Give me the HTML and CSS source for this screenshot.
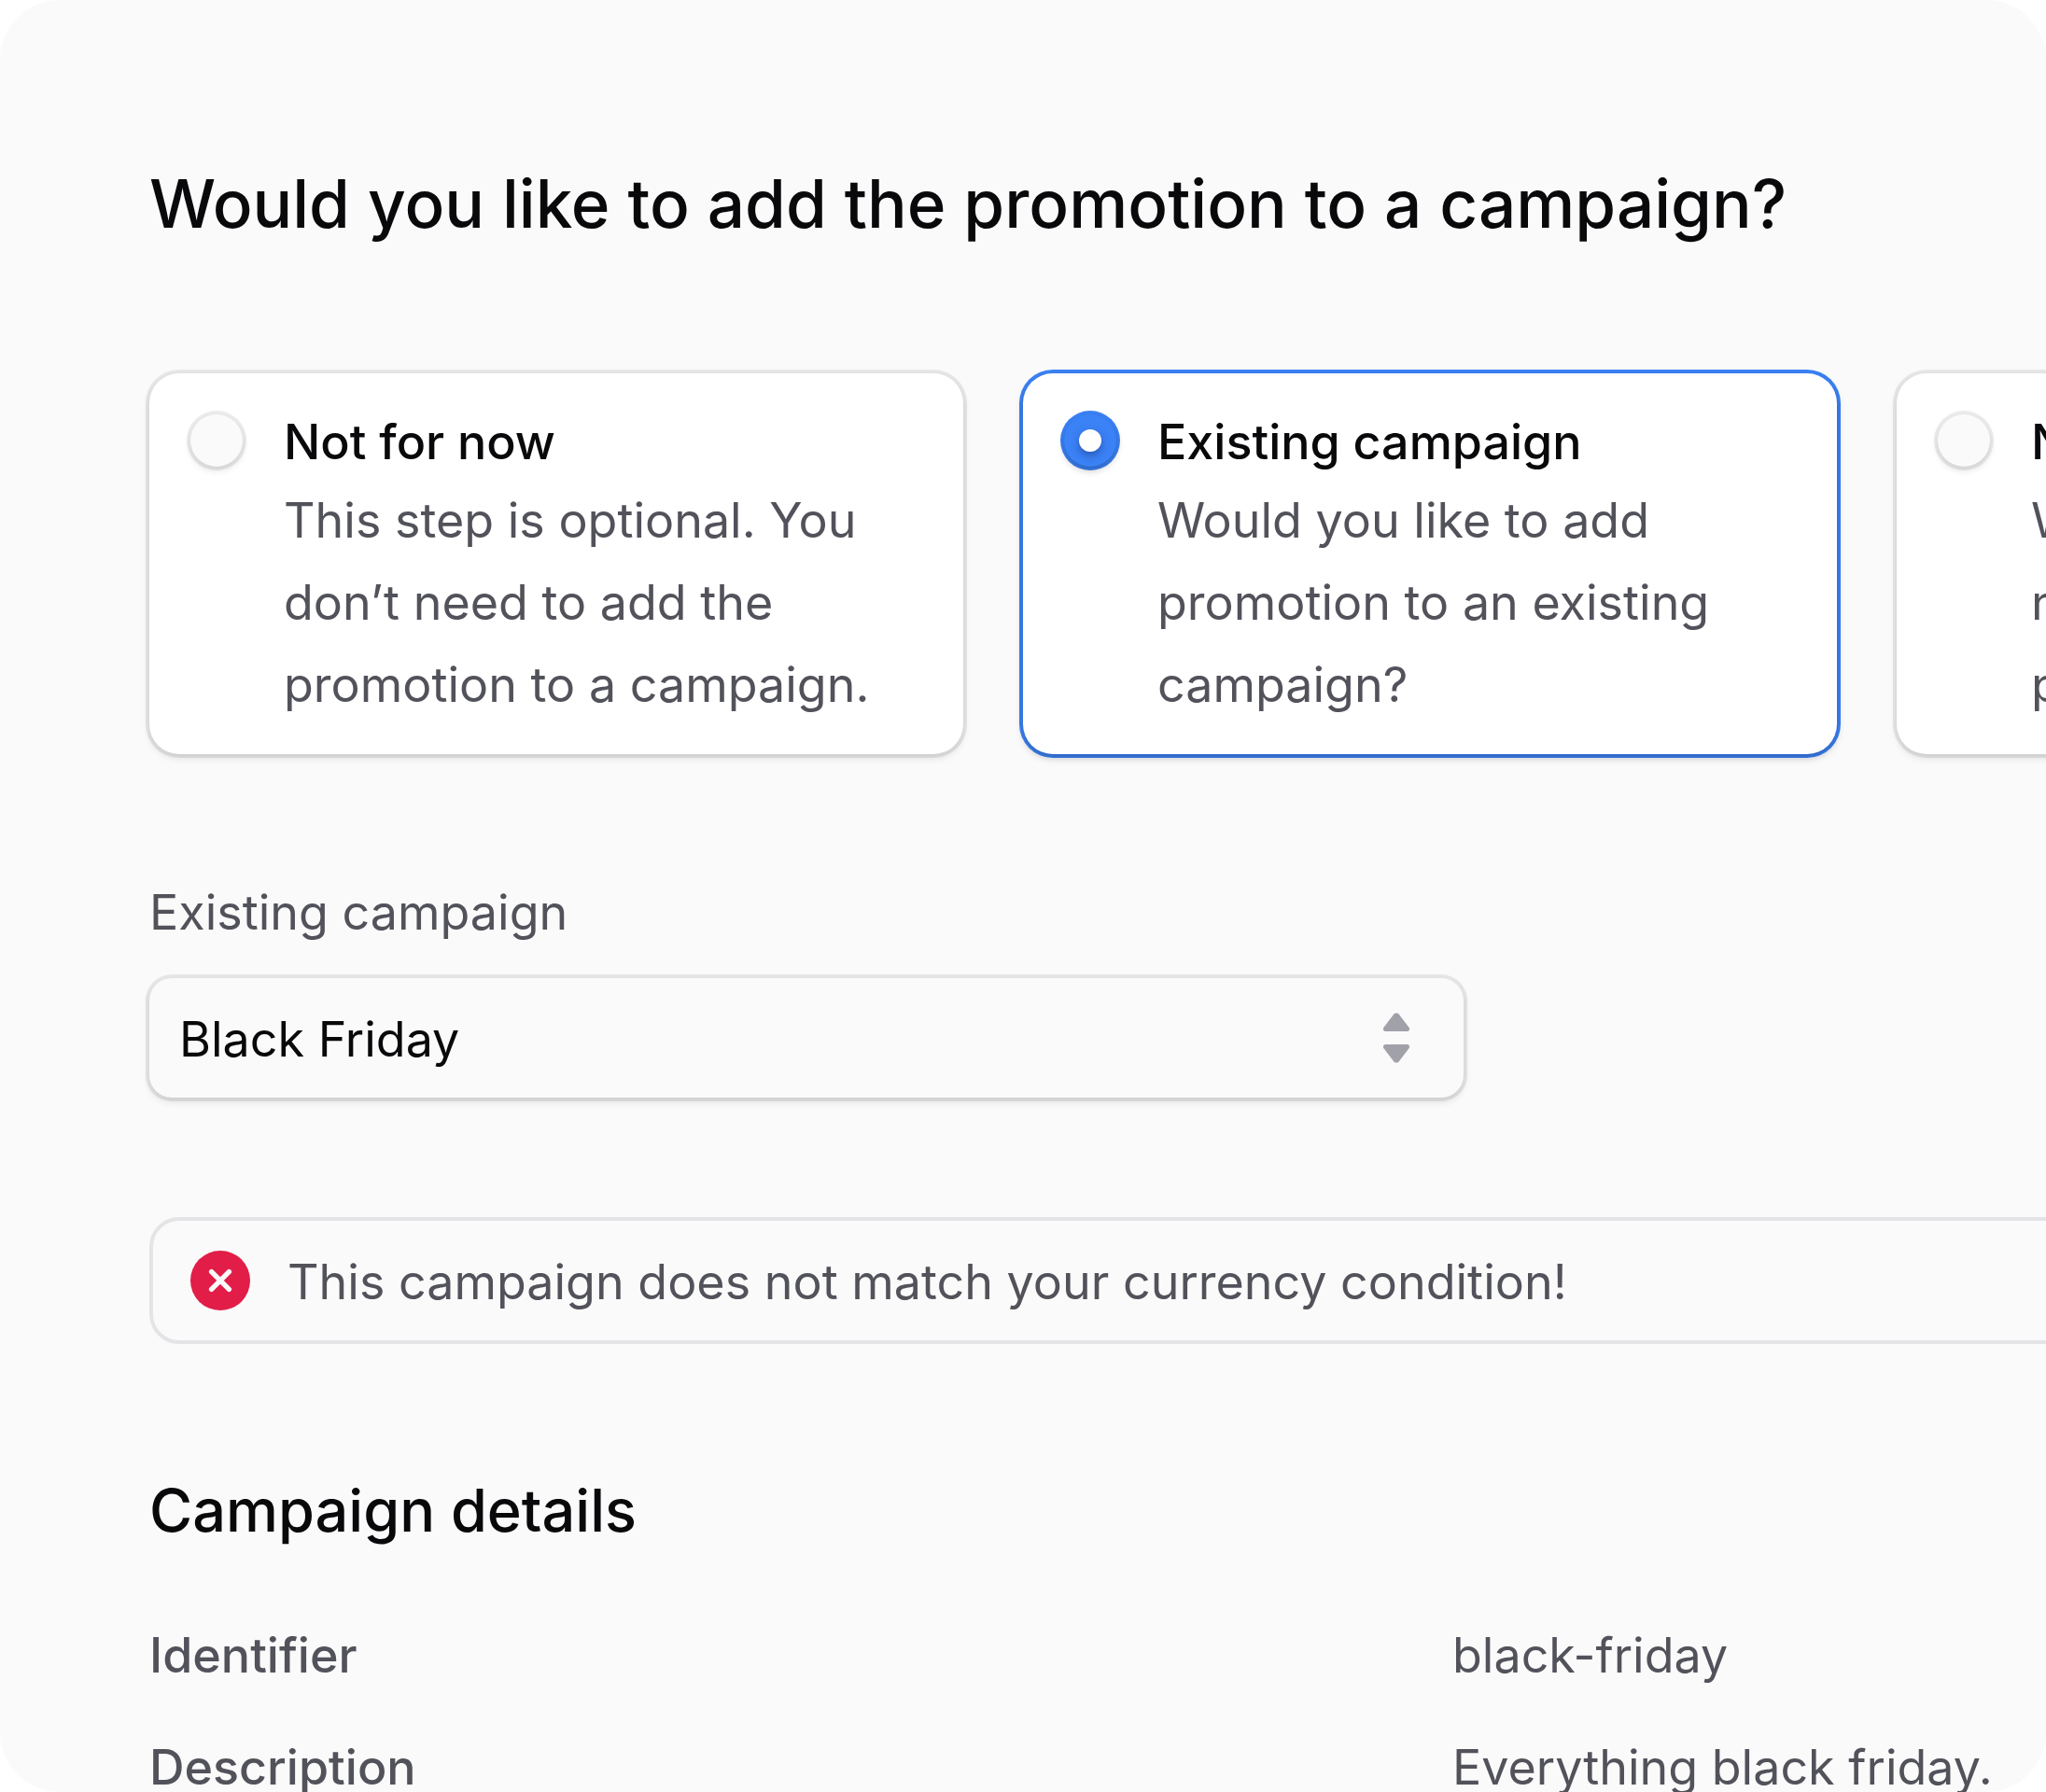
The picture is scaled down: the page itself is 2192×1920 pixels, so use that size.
FILE: index.html
```html
<!DOCTYPE html>
<html lang="en">
<head>
  <meta charset="utf-8">
  <meta name="viewport" content="width=device-width, initial-scale=1">
  <title>Add promotion to a campaign</title>
  <link rel="stylesheet" href="styles.css">
</head>
<body>
  <main class="panel">
    <form class="form">
      <h1 class="title" id="title">Would you like to add the promotion to a campaign?</h1>

      <div class="choices" role="radiogroup" aria-labelledby="title">
        <label class="choice">
          <input class="radio" type="radio" name="campaign-mode" value="none">
          <span class="choice-text">
            <span class="choice-label">Not for now</span>
            <span class="choice-hint">This step is optional. You don’t need to add the promotion to a campaign.</span>
          </span>
        </label>
        <label class="choice">
          <input class="radio" type="radio" name="campaign-mode" value="existing" checked>
          <span class="choice-text">
            <span class="choice-label">Existing campaign</span>
            <span class="choice-hint">Would you like to add promotion to an existing campaign?</span>
          </span>
        </label>
        <label class="choice">
          <input class="radio" type="radio" name="campaign-mode" value="new">
          <span class="choice-text">
            <span class="choice-label">New campaign</span>
            <span class="choice-hint">Would you like to create a new campaign for this promotion?</span>
          </span>
        </label>
      </div>

      <div class="field">
        <label class="field-label" for="campaign">Existing campaign</label>
        <div class="select-wrap">
          <select class="select" id="campaign">
            <option>Black Friday</option>
          </select>
          <svg class="select-icon" viewBox="0 0 80 80" aria-hidden="true">
            <path d="M37.4 14.6a3.4 3.4 0 0 1 5.2 0l10.7 13.8c1.7 2.2.5 4.6-2.3 4.6H29c-2.800 0-4-2.400-2.300-4.600z"/>
            <path d="M37.4 65.4a3.4 3.4 0 0 0 5.2 0l10.7-13.8c1.7-2.2.5-4.6-2.3-4.6H29c-2.800 0-4 2.400-2.300 4.600z"/>
          </svg>
        </div>
      </div>

      <div class="alert" role="alert">
        <svg class="alert-icon" viewBox="0 0 80 80" aria-hidden="true">
          <circle cx="40" cy="40" r="32" fill="#e11d48"/>
          <path d="M30.6 30.6l18.800 18.800M49.400 30.600L30.600 49.400" fill="none" stroke="#fafafa" stroke-width="5.4" stroke-linecap="round"/>
        </svg>
        <span class="alert-text">This campaign does not match your currency condition!</span>
      </div>

      <section class="details">
        <h2 class="subtitle">Campaign details</h2>
        <dl class="rows">
          <div class="row">
            <dt>Identifier</dt>
            <dd>black-friday</dd>
          </div>
          <div class="row">
            <dt>Description</dt>
            <dd>Everything black friday.</dd>
          </div>
        </dl>
      </section>
    </form>
  </main>
</body>
</html>
```

FILE: styles.css
```css
:root {
  --text: #09090b;
  --text-muted: #52525b;
  --surface: #fafafa;
  --blue: #3b82f6;
  --outline: 0 4px 8px rgba(0, 0, 0, 0.12), 0 0 0 4px rgba(9, 9, 11, 0.08);
  --outline-active: 0 4px 8px rgba(0, 0, 0, 0.24), 0 0 0 4px var(--blue);
}

* {
  box-sizing: border-box;
}

body {
  margin: 0;
  background: #ffffff;
  color: var(--text);
  font-family: Inter, "Liberation Sans", sans-serif;
  font-size: 52px;
  line-height: 80px;
}

.panel {
  height: 100vh;
  padding: 160px;
  overflow: hidden;
  border-radius: 64px;
  background: var(--surface);
}

.form {
  display: flex;
  flex-direction: column;
  width: max-content;
}

.title,
.subtitle {
  margin: 0;
  font-weight: 500;
}

.title {
  margin-bottom: 124px;
  font-size: 71px;
  line-height: 116px;
}

.choices {
  display: grid;
  grid-template-columns: repeat(3, 872px);
  gap: 64px;
}

.choice {
  display: flex;
  gap: 32px;
  padding: 34px 32px 30px;
  border-radius: 32px;
  background: #ffffff;
  box-shadow: var(--outline);
}

.choice:has(.radio:checked) {
  box-shadow: var(--outline-active);
}

.radio {
  appearance: none;
  display: grid;
  place-items: center;
  flex: none;
  width: 56px;
  height: 56px;
  margin: 10px 12px;
  border-radius: 50%;
  background: var(--surface);
  box-shadow: var(--outline);
}

.radio:checked {
  background: var(--blue);
  box-shadow: var(--outline-active);
}

.radio:checked::before {
  content: "";
  width: 24px;
  height: 24px;
  border-radius: 50%;
  background: #ffffff;
  box-shadow: 0 4px 8px rgba(30, 58, 138, 0.6);
}

.choice-text {
  display: flex;
  flex-direction: column;
}

.choice-label {
  font-weight: 500;
}

.choice-hint {
  color: var(--text-muted);
  line-height: 88px;
}

.field {
  display: flex;
  flex-direction: column;
  gap: 30px;
  width: 1408px;
  margin-top: 130px;
}

.field-label {
  color: var(--text-muted);
}

.select-wrap {
  display: grid;
  align-items: center;
}

.select {
  grid-area: 1 / 1;
  appearance: none;
  width: 100%;
  height: 128px;
  margin: 0;
  padding: 4px 112px 0 32px;
  border: 0;
  border-radius: 24px;
  background: var(--surface);
  box-shadow: var(--outline);
  color: var(--text);
  font: inherit;
}

.select-icon {
  grid-area: 1 / 1;
  justify-self: end;
  width: 80px;
  height: 80px;
  margin-right: 32px;
  fill: #a1a1aa;
  pointer-events: none;
}

.alert {
  display: flex;
  align-items: center;
  gap: 32px;
  margin-top: 128px;
  padding: 22px 32px;
  border: 4px solid #e4e4e7;
  border-radius: 32px;
  color: var(--text-muted);
}

.alert-icon {
  flex: none;
  width: 80px;
  height: 80px;
}

.alert-text {
  padding-top: 4px;
}

.details {
  margin-top: 130px;
}

.subtitle {
  margin-bottom: 68px;
  font-size: 63px;
  line-height: 96px;
}

.rows {
  display: flex;
  flex-direction: column;
  gap: 40px;
  margin: 0;
  color: var(--text-muted);
}

.row {
  display: grid;
  grid-template-columns: 1fr 1fr;
  gap: 48px;
}

.row dt {
  font-weight: 500;
}

.row dd {
  margin: 0;
}
```
